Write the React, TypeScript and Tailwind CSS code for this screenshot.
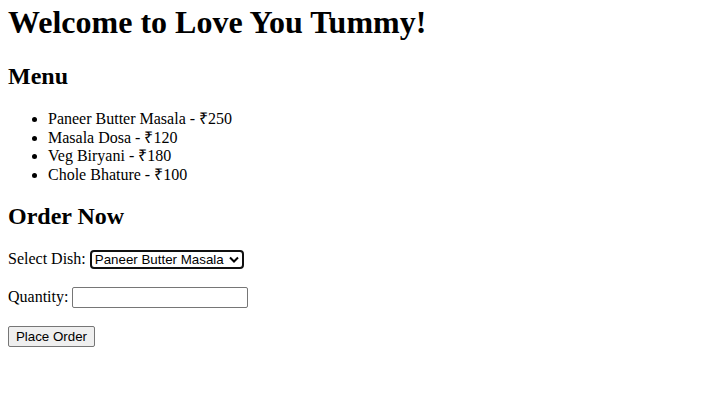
import React, { useState } from "react";

export default function App() {
  const items = [
    "Paneer Butter Masala - ₹250",
    "Masala Dosa - ₹120",
    "Veg Biryani - ₹180",
    "Chole Bhature - ₹100",
  ];
  const [dish, setDish] = useState("Paneer Butter Masala");
  return (
    <div className="min-h-[412px] bg-white px-2 pt-[4px] font-['Liberation_Serif','Times_New_Roman',serif] text-[16px] leading-[18.4px] text-black">
      <h1 className="mb-[21.44px] h-[37px] text-[32px] font-bold leading-[37px]">Welcome to Love You Tummy!</h1>
      <h2 className="mb-[19.92px] h-[28px] text-[24px] font-bold leading-[28px]">Menu</h2>
      <ul className="mb-[18px] list-disc pl-[40px]">
        {items.map((it) => (
          <li key={it} className="h-[18.4px] leading-[18.4px]">
            {it}
          </li>
        ))}
      </ul>
      <h2 className="mb-[19.92px] h-[28px] text-[24px] font-bold leading-[28px]">Order Now</h2>
      <form onSubmit={(e) => e.preventDefault()}>
        <div className="mb-[18px] flex h-[19px] items-center">
          <span className="mr-[4px]">Select Dish:</span>
          <span className="relative flex h-[19px] w-[154px] items-center justify-between rounded-[4px] border-2 border-[#101010] bg-white pl-[3px] pr-[3px] font-['Liberation_Sans',Arial,sans-serif] text-[13.33px] leading-[15px] text-black">
            <span>{dish}</span>
            <svg width="10" height="7" viewBox="0 0 10 7" fill="none">
              <path d="M1 1.5 L5 5.5 L9 1.5" stroke="#000" strokeWidth="2" />
            </svg>
            <select
              value={dish}
              onChange={(e) => setDish(e.target.value)}
              className="absolute inset-0 cursor-pointer appearance-none opacity-0"
            >
              <option>Paneer Butter Masala</option>
              <option>Masala Dosa</option>
              <option>Veg Biryani</option>
              <option>Chole Bhature</option>
            </select>
          </span>
        </div>
        <div className="mb-[18px] flex h-[21px] items-center">
          <span className="mr-[4px]">Quantity:</span>
          <input
            type="number"
            className="block h-[21px] w-[176px] rounded-[2px] border border-[#767676] bg-white px-[2px] font-['Liberation_Sans',Arial,sans-serif] text-[13.33px] outline-none"
          />
        </div>
        <button
          type="submit"
          className="block h-[21px] w-[87px] rounded-[2px] border border-[#767676] bg-[#efefef] px-[6px] font-['Liberation_Sans',Arial,sans-serif] text-[13.33px] leading-[15px] text-black"
        >
          Place Order
        </button>
      </form>
    </div>
  );
}
